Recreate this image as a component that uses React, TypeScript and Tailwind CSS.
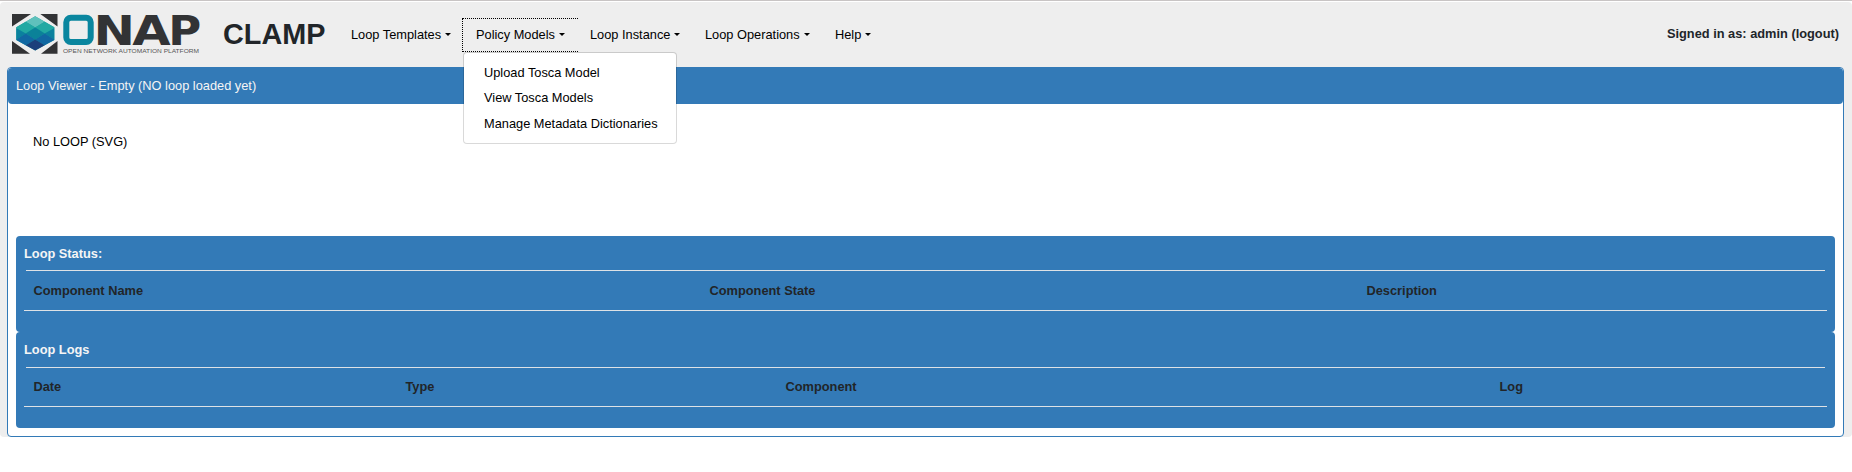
const navItems = [
  { label: "Loop Templates", width: "w-[125px]" },
  { label: "Policy Models", width: "w-[114px]" },
  { label: "Loop Instance", width: "w-[115px]" },
  { label: "Loop Operations", width: "w-[130px]" },
  { label: "Help", width: "w-[60px]" },
];

const menuItems = ["Upload Tosca Model", "View Tosca Models", "Manage Metadata Dictionaries"];

function OnapLogo() {
  return (
    <svg className="block h-[42px] w-[190px] shrink-0 overflow-visible" viewBox="11 13 190 42" aria-label="ONAP">
      <path fill="#323335" d="M12 14H31L12 26.5ZM57.5 14V26.5L40.3 14ZM12 53.7V41L30 53.7ZM57.5 53.7H41L57.5 41Z" />
      <path fill="#16a19c" d="M35.2 16.3 54.3 27.2V40L35.2 50.6 16.3 40V27.2Z" />
      <path fill="#5fc1bc" d="M35.2 16.3 44.7 21.8 35.2 27.5 25.7 21.8Z" />
      <path fill="#22a9a3" d="M25.7 21.8 35.2 27.5 25.7 33.5 16.3 28.2V27.2ZM44.7 21.8 54.3 27.2V28.2L44.7 33.5 35.2 27.5Z" />
      <path fill="#0b8299" d="M35.2 27.5 44.7 33.5 35.2 39.4 25.7 33.5Z" />
      <path fill="#0b819e" d="M16.3 28.2 25.7 33.5 16.3 39.4ZM54.3 28.2V39.4L44.7 33.5Z" />
      <path fill="#1168a2" d="M25.7 33.5 35.2 39.4 25.7 45.3 16.3 40V39.4ZM44.7 33.5 54.3 39.4V40L44.7 45.3 35.2 39.4Z" />
      <path fill="#1b3f7b" d="M35.2 39.4 44.7 45.3 35.2 50.6 25.7 45.3Z" />
      <rect x="66.3" y="17.8" width="24.4" height="24.2" rx="4.5" fill="none" stroke="#0a869f" strokeWidth="6" />
      <g fill="#323335" fontFamily="DejaVu Sans" fontWeight="700" fontSize="40.7">
        <text x="93.4" y="44.7" textLength="41.5" lengthAdjust="spacingAndGlyphs">N</text>
        <text x="132.2" y="44.7" textLength="38.4" lengthAdjust="spacingAndGlyphs">A</text>
        <text x="168.2" y="44.7" textLength="33" lengthAdjust="spacingAndGlyphs">P</text>
      </g>
      <text x="63" y="53.3" fill="#555" fontFamily="Liberation Sans" fontSize="6" textLength="136" lengthAdjust="spacingAndGlyphs">
        OPEN NETWORK AUTOMATION PLATFORM
      </text>
    </svg>
  );
}

function Caret() {
  return <span className="ml-1 mt-[-1px] inline-block border-x-[3px] border-t-[3px] border-x-transparent border-t-black" />;
}

function PolicyMenu() {
  return (
    <div className="absolute -left-px top-[34px] z-10 h-[92px] w-[214px] rounded border border-black/15 bg-white bg-clip-padding pt-[7px]">
      {menuItems.map((item) => (
        <div key={item} className="h-[25.3px] whitespace-nowrap pl-[20px] leading-[26px]">{item}</div>
      ))}
    </div>
  );
}

interface DataPanelProps {
  title: string;
  titleHeight: string;
  rowHeight: string;
  columns: { label: string; width: string }[];
}

function DataPanel({ title, titleHeight, rowHeight, columns }: DataPanelProps) {
  return (
    <section className="h-24 rounded bg-[#337ab7] px-2 font-bold">
      <h2 className={`leading-[35px] text-[#f5f5f5] ${titleHeight}`}>{title}</h2>
      <div className="mx-[2px] h-px bg-[#dee2e6]" />
      <div className={`flex border-b border-[#dee2e6] pl-[9.5px] text-[#212529] ${rowHeight}`}>
        {columns.map((c) => (
          <div key={c.label} className={c.width}>{c.label}</div>
        ))}
      </div>
    </section>
  );
}

export default function App() {
  return (
    <div className="h-[472px] w-[1852px] overflow-hidden border-t border-[#c8c4c4] bg-white pt-px font-['Liberation_Sans',Arial,sans-serif] text-[12.8px] leading-[20px] text-black">
      <div className="h-[435px] rounded bg-[#eee]">
        <header className="flex h-[65px] items-start">
          <div className="pl-[11px] pt-[11px]"><OnapLogo /></div>
          <h1 className="ml-[22px] mt-[12px] w-[116px] text-[28.8px] font-bold leading-[40px] text-[#212529]">CLAMP</h1>
          <nav className="mt-[16px] flex">
            {navItems.map((item, i) => (
              <div key={item.label} className={`relative h-[34px] ${item.width}`}>
                {i === 1 && <div className="absolute -left-[2px] top-0 h-[34px] w-[116px] border-y border-l border-dotted border-black" />}
                <div className="flex items-center whitespace-nowrap pl-[12px] leading-[34px]">
                  {item.label}
                  <Caret />
                </div>
                {i === 1 && <PolicyMenu />}
              </div>
            ))}
          </nav>
          <div className="ml-auto mr-[13px] mt-[22px] font-bold text-[#212529]">Signed in as: admin (logout)</div>
        </header>
        <main className="ml-[7px] mr-[8px] h-[370px] rounded border border-[#337ab7] bg-white">
          <div className="h-[36px] rounded bg-[#337ab7] pl-[8px] leading-[36px] text-[#f5f5f5]">
            Loop Viewer - Empty (NO loop loaded yet)
          </div>
          <div className="h-[132px] pl-[25px] pt-[28px]">No LOOP (SVG)</div>
          <div className="px-2">
            <DataPanel
              title="Loop Status:"
              titleHeight="h-[34px]"
              rowHeight="h-[40px] leading-[40px]"
              columns={[
                { label: "Component Name", width: "w-[676px]" },
                { label: "Component State", width: "w-[657px]" },
                { label: "Description", width: "w-[400px]" },
              ]}
            />
            <DataPanel
              title="Loop Logs"
              titleHeight="h-[35px]"
              rowHeight="h-[39px] leading-[38px]"
              columns={[
                { label: "Date", width: "w-[372px]" },
                { label: "Type", width: "w-[380px]" },
                { label: "Component", width: "w-[714px]" },
                { label: "Log", width: "w-[200px]" },
              ]}
            />
          </div>
        </main>
      </div>
    </div>
  );
}
